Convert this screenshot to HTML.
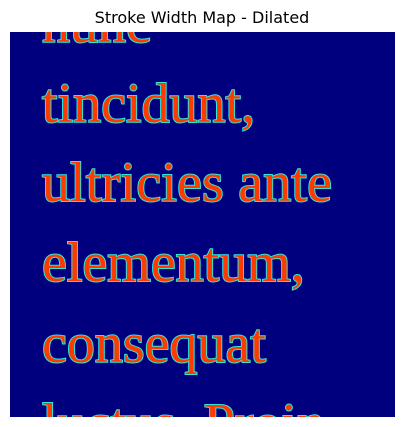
<!DOCTYPE html>
<html><head><style>
html,body{margin:0;padding:0;background:#fff;width:404px;height:427px;overflow:hidden}
.t{position:absolute;top:8px;left:0;width:404px;text-align:center;font-family:"DejaVu Sans",sans-serif;font-size:16px;line-height:19px;color:#000}
svg{position:absolute;left:10px;top:32px;display:block}
</style></head><body>
<div class="t">Stroke Width Map - Dilated</div>
<svg width="385" height="385" viewBox="0 0 385 385">
<rect width="385" height="385" fill="#00007f"/>
<g font-family="Liberation Serif,serif" font-size="56" fill="#ff3a00" stroke="#30e8d8" stroke-width="2" paint-order="stroke">
<text x="32" y="10">nunc</text>
<text x="32" y="90">tincidunt,</text>
<text x="32" y="169" textLength="290">ultricies ante</text>
<text x="32" y="249">elementum,</text>
<text x="32" y="330">consequat</text>
<text x="32" y="410">luctus. Proin</text>
</g>
</svg>
</body></html>
